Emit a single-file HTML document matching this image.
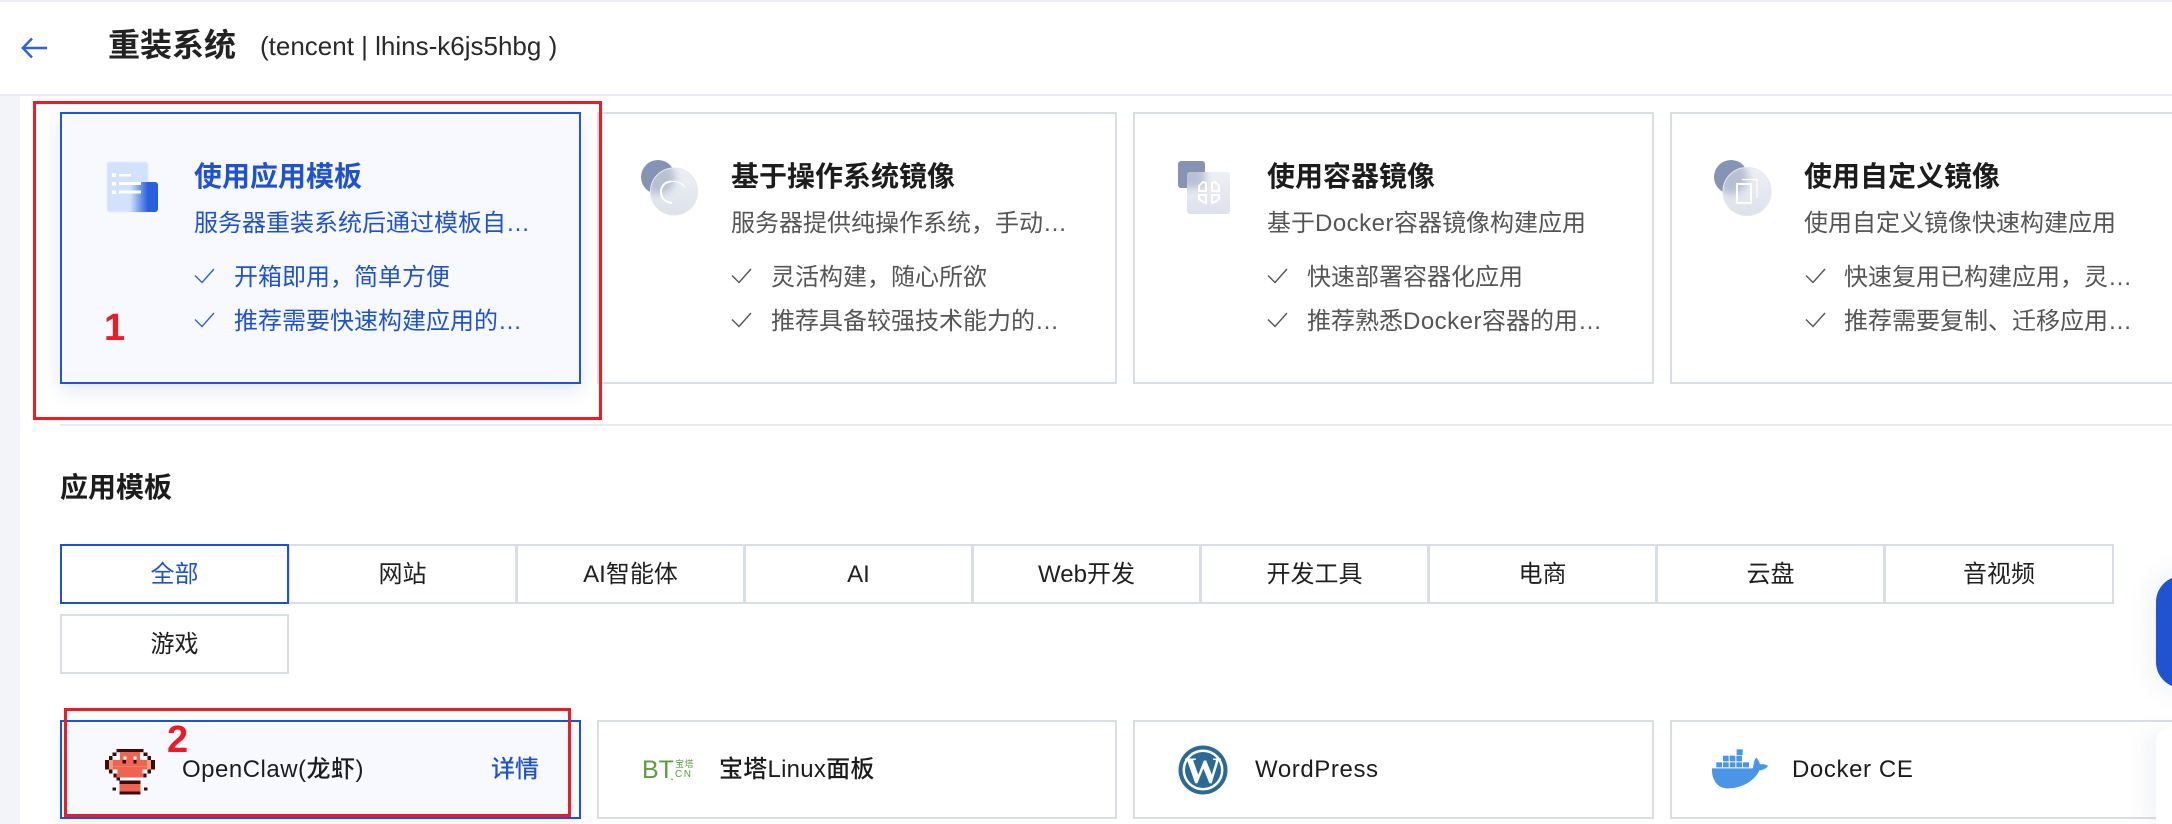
<!DOCTYPE html>
<html lang="zh-CN">
<head>
<meta charset="utf-8">
<title>重装系统</title>
<style>
html,body{margin:0;padding:0;width:2172px;height:824px;overflow:hidden;background:#fff}
body{font-family:"Liberation Sans","Noto Sans CJK SC",sans-serif;color:#1c1c1c}
#root{position:absolute;left:0;top:0;width:2172px;height:824px;overflow:hidden;filter:blur(.3px)}
.a,.t,.card,.tab,.item,.box{position:absolute;box-sizing:border-box}
.t{white-space:nowrap;line-height:40px;height:40px}
.card{top:112px;width:521px;height:272px;border:2px solid #d9dde4;background:#fff}
.card.on{border-color:#2257d4;background:#f8f9ff;box-shadow:0 6px 18px rgba(60,80,140,.14);z-index:2}
.ti{font-size:28px;font-weight:700;color:#1c1c1c}
.de{font-size:24px;color:#555}
.li{font-size:24px;color:#555}
.la{letter-spacing:.5px}
.blue{color:#1f52cf!important}
.tab{top:544px;height:60px;width:229px;border:2px solid #d9dde4;background:#fff;font-size:24px;line-height:58px;text-align:center;color:#1f1f1f}
.tab.on{border-color:#1f52cf;color:#1f52cf;z-index:2}
.item{top:720px;height:99px;width:521px;border:2px solid #d9dde4;background:#fff}
.item.on{border-color:#1f52cf;background:#f8f9ff;box-shadow:0 4px 14px rgba(60,80,140,.1)}
.nm{font-size:24px;color:#1c1c1c;font-weight:500}
.box{border:3px solid #ed1c24;z-index:6}
.red{color:#ed1c24;font-weight:700;font-family:"Liberation Sans",sans-serif;z-index:6}
svg{position:absolute;overflow:visible}
</style>
</head>
<body>
<div id="root">
<!-- page chrome -->
<div class="a" style="left:0;top:0;width:2172px;height:2px;background:#eceef3"></div>
<div class="a" style="left:0;top:94px;width:2172px;height:2px;background:#e9ebf0"></div>
<div class="a" style="left:0;top:96px;width:20px;height:728px;background:#f3f4f9"></div>
<svg style="left:0;top:0" width="60" height="90" viewBox="0 0 60 90"><path d="M47 48H24M32 38.500L22.800 48L32 57.500" fill="none" stroke="#2f62d8" stroke-width="2.400"/></svg>
<div class="t" style="left:108px;top:25px;font-size:32px;font-weight:700;color:#222">重装系统</div>
<div class="t" style="left:260px;top:26px;font-size:26px;color:#2a2a2a">(tencent | lhins-k6js5hbg )</div>

<!-- top cards -->
<div class="card on" style="left:60px"></div>
<div class="card" style="left:597px;width:520px"></div>
<div class="card" style="left:1133px"></div>
<div class="card" style="left:1670px"></div>

<!-- icon 1 -->
<svg style="left:0;top:0;z-index:3" width="200" height="230" viewBox="0 0 200 230">
<defs><linearGradient id="g1" x1="130" x2="148" y1="0" y2="0" gradientUnits="userSpaceOnUse"><stop offset="0" stop-color="#d3e2fc"/><stop offset="1" stop-color="#2a5fdd"/></linearGradient></defs>
<rect x="107" y="162" width="41" height="50" rx="3" fill="#d3e2fc" stroke="#e0eafd" stroke-width="1"/>
<path d="M130 182H155a3 3 0 0 1 3 3V209a3 3 0 0 1-3 3H130Z" fill="url(#g1)"/>
<g fill="#fff"><rect x="112" y="173" width="4" height="4"/><rect x="112" y="182" width="4" height="3.500"/><rect x="112" y="190.500" width="4" height="3.500"/><rect x="119" y="174" width="12" height="2.500"/><rect x="119" y="182" width="22" height="3"/><rect x="119" y="190.500" width="22" height="3"/></g>
</svg>

<!-- icon 2 -->
<svg style="left:0;top:0;z-index:3" width="720" height="230" viewBox="0 0 720 230">
<defs>
<linearGradient id="g2" x1="0" y1="0" x2="0" y2="1"><stop offset="0" stop-color="#eef0f5"/><stop offset="1" stop-color="#dde1ea"/></linearGradient>
<filter id="b2" x="-30%" y="-30%" width="160%" height="160%"><feGaussianBlur stdDeviation="4"/></filter>
<clipPath id="c2"><circle cx="674" cy="191.500" r="24"/></clipPath>
</defs>
<circle cx="658" cy="177" r="17" fill="#8593b4"/>
<circle cx="674" cy="191.500" r="24" fill="url(#g2)"/>
<circle cx="658" cy="177" r="17" fill="#8593b4" filter="url(#b2)" clip-path="url(#c2)" opacity=".5"/>
<circle cx="674" cy="191.500" r="23.500" fill="none" stroke="#e3e7ee"/>
<path d="M671 181.500C664 182 661 187 661 192C661 198 665 202 672 203" fill="none" stroke="#fff" stroke-width="2"/>
<path d="M671 181.500C676 181 681 182 685 187" fill="none" stroke="#fff" stroke-width="1.200"/>
</svg>

<!-- icon 3 -->
<svg style="left:0;top:0;z-index:3" width="1240" height="230" viewBox="0 0 1240 230">
<defs>
<filter id="b3" x="-30%" y="-30%" width="160%" height="160%"><feGaussianBlur stdDeviation="4"/></filter>
<clipPath id="c3"><rect x="1187" y="172" width="43" height="42" rx="3"/></clipPath>
</defs>
<rect x="1178" y="161" width="27" height="27" rx="3" fill="#8593b4"/>
<rect x="1187" y="172" width="43" height="42" rx="3" fill="url(#g2)"/>
<rect x="1178" y="161" width="27" height="27" rx="3" fill="#8593b4" filter="url(#b3)" clip-path="url(#c3)" opacity=".5"/>
<g fill="none" stroke="#fff" stroke-width="2">
<path d="M1199 186V191H1206V183L1203 182Z"/><path d="M1219 186V191H1212V183L1215 182Z"/>
<path d="M1199 199V195H1206V203L1203 202Z"/><path d="M1219 199V195H1212V203L1215 202Z"/>
</g>
</svg>

<!-- icon 4 -->
<svg style="left:0;top:0;z-index:3" width="1790" height="230" viewBox="0 0 1790 230">
<defs>
<filter id="b4" x="-30%" y="-30%" width="160%" height="160%"><feGaussianBlur stdDeviation="4"/></filter>
<clipPath id="c4"><circle cx="1747" cy="191.500" r="24.500"/></clipPath>
</defs>
<circle cx="1731" cy="177" r="17" fill="#8593b4"/>
<circle cx="1747" cy="191.500" r="24.500" fill="url(#g2)"/>
<circle cx="1731" cy="177" r="17" fill="#8593b4" filter="url(#b4)" clip-path="url(#c4)" opacity=".5"/>
<circle cx="1747" cy="191.500" r="24" fill="none" stroke="#e3e7ee"/>
<rect x="1737" y="184" width="14" height="19" fill="none" stroke="#fff" stroke-width="2"/>
<path d="M1742 179.500H1757V198" fill="none" stroke="#fff" stroke-width="1.200"/>
</svg>

<!-- checks -->
<svg style="left:0;top:0;z-index:3" width="1840" height="340" viewBox="0 0 1840 340" fill="none" stroke-width="1.400">
<g stroke="#2f62d8"><path d="M195 275.500L202 282.500L214 269"/><path d="M195 319.500L202 326.500L214 313"/></g>
<g stroke="#555"><path d="M732 275.500L739 282.500L751 269"/><path d="M732 319.500L739 326.500L751 313"/>
<path d="M1268 275.500L1275 282.500L1287 269"/><path d="M1268 319.500L1275 326.500L1287 313"/>
<path d="M1806 275.500L1813 282.500L1825 269"/><path d="M1806 319.500L1813 326.500L1825 313"/></g>
</svg>

<!-- card texts -->
<div class="t ti blue" style="left:194px;top:157px;z-index:3">使用应用模板</div>
<div class="t de blue" style="left:194px;top:204px;z-index:3">服务器重装系统后通过模板自…</div>
<div class="t li blue" style="left:234px;top:258px;z-index:3">开箱即用，简单方便</div>
<div class="t li blue" style="left:234px;top:302px;z-index:3">推荐需要快速构建应用的…</div>

<div class="t ti" style="left:731px;top:157px">基于操作系统镜像</div>
<div class="t de" style="left:731px;top:204px">服务器提供纯操作系统，手动…</div>
<div class="t li" style="left:771px;top:258px">灵活构建，随心所欲</div>
<div class="t li" style="left:771px;top:302px">推荐具备较强技术能力的…</div>

<div class="t ti" style="left:1267px;top:157px">使用容器镜像</div>
<div class="t de" style="left:1267px;top:204px">基于<span class="la">Docker</span>容器镜像构建应用</div>
<div class="t li" style="left:1307px;top:258px">快速部署容器化应用</div>
<div class="t li" style="left:1307px;top:302px">推荐熟悉<span class="la">Docker</span>容器的用…</div>

<div class="t ti" style="left:1804px;top:157px">使用自定义镜像</div>
<div class="t de" style="left:1804px;top:204px">使用自定义镜像快速构建应用</div>
<div class="t li" style="left:1844px;top:258px">快速复用已构建应用，灵…</div>
<div class="t li" style="left:1844px;top:302px">推荐需要复制、迁移应用…</div>

<!-- annotation 1 -->
<div class="box" style="left:33px;top:101px;width:569px;height:319px"></div>
<div class="t red" style="left:104px;top:308px;font-size:38px">1</div>

<!-- divider -->
<div class="a" style="left:60px;top:424px;width:2112px;height:2px;background:#e9ebf0"></div>

<!-- section -->
<div class="t" style="left:60px;top:468px;font-size:28px;font-weight:700;color:#1c1c1c">应用模板</div>

<!-- tabs -->
<div class="tab on" style="left:60px;">全部</div>
<div class="tab" style="left:288px">网站</div>
<div class="tab" style="left:516px">AI智能体</div>
<div class="tab" style="left:744px">AI</div>
<div class="tab" style="left:972px">Web开发</div>
<div class="tab" style="left:1200px">开发工具</div>
<div class="tab" style="left:1428px">电商</div>
<div class="tab" style="left:1656px">云盘</div>
<div class="tab" style="left:1884px;width:230px">音视频</div>
<div class="tab" style="left:60px;top:614px">游戏</div>

<!-- items -->
<div class="item on" style="left:60px"></div>
<div class="item" style="left:597px;width:520px"></div>
<div class="item" style="left:1133px"></div>
<div class="item" style="left:1670px"></div>

<!-- crab -->
<svg style="left:90px;top:730px;z-index:3" width="90" height="70" viewBox="0 0 270 210" shape-rendering="crispEdges">
<g fill="#ef6351"><rect x="80" y="66" width="80" height="12"/><rect x="68" y="78" width="104" height="12"/><rect x="57" y="90" width="126" height="34"/><rect x="70" y="124" width="100" height="12"/><rect x="80" y="136" width="80" height="6"/><rect x="88" y="162" width="64" height="22"/></g>
<g fill="#f59a7f"><rect x="57" y="90" width="12" height="28"/><rect x="171" y="90" width="12" height="28"/><rect x="57" y="108" width="126" height="2"/></g>
<g fill="#fff"><rect x="80" y="68" width="10" height="10"/><rect x="150" y="68" width="10" height="10"/><rect x="68" y="78" width="22" height="12"/><rect x="150" y="78" width="22" height="12"/><rect x="100" y="80" width="10" height="8"/><rect x="130" y="80" width="10" height="8"/><rect x="68" y="118" width="14" height="12"/><rect x="158" y="118" width="14" height="12"/><rect x="78" y="163" width="10" height="9"/><rect x="152" y="163" width="10" height="9"/></g>
<g fill="#3a0d0d"><rect x="80" y="57" width="80" height="9"/><rect x="68" y="68" width="12" height="10"/><rect x="160" y="68" width="12" height="10"/><rect x="57" y="78" width="11" height="12"/><rect x="172" y="78" width="11" height="12"/><rect x="45" y="90" width="12" height="28"/><rect x="183" y="90" width="12" height="28"/><rect x="57" y="118" width="11" height="12"/><rect x="172" y="118" width="11" height="12"/><rect x="70" y="130" width="10" height="12"/><rect x="160" y="130" width="10" height="12"/><rect x="80" y="142" width="10" height="9"/><rect x="88" y="152" width="64" height="10"/><rect x="68" y="172" width="10" height="10"/><rect x="162" y="172" width="10" height="10"/><rect x="88" y="184" width="64" height="9"/><rect x="98" y="90" width="10" height="10"/><rect x="130" y="90" width="10" height="10"/></g>
</svg>
<div class="t nm" style="left:182px;top:750px;z-index:3;letter-spacing:.5px">OpenClaw(龙虾)</div>
<div class="t nm blue" style="left:491px;top:750px;z-index:3;font-weight:500">详情</div>

<!-- BT -->
<div class="t" style="left:642px;top:750px;font-size:25px;color:#5b9e40;line-height:40px">BT</div>
<div class="t" style="left:670px;top:755px;font-size:14px;color:#5b9e40;line-height:40px">.</div>
<div class="t" style="left:675px;top:744px;font-size:9px;color:#5b9e40;line-height:40px;letter-spacing:.5px">宝塔</div>
<div class="t" style="left:675px;top:755px;font-size:10px;color:#5b9e40;line-height:40px;letter-spacing:1.500px">CN</div>
<div class="t nm" style="left:719px;top:750px;letter-spacing:.25px">宝塔Linux面板</div>

<!-- WordPress -->
<svg style="left:1178px;top:745px" width="50" height="50" viewBox="0 0 50 50">
<circle cx="25" cy="25" r="24.500" fill="#2a6a94"/>
<circle cx="25" cy="25" r="20.500" fill="#fff"/>
<circle cx="25" cy="25" r="18" fill="#2a6a94"/>
<text x="25" y="38" text-anchor="middle" font-family="Liberation Serif,serif" font-weight="700" font-size="37" fill="#fff">W</text>
</svg>
<div class="t nm" style="left:1255px;top:750px;letter-spacing:.6px">WordPress</div>

<!-- Docker -->
<svg style="left:1690px;top:735px" width="100" height="70" viewBox="0 0 300 210">
<path fill="#4a95e6" d="M66 100H188C191 92 190 80 198 68C204 72 208 80 210 88C218 86 228 88 234 93C228 102 216 106 208 106C196 134 160 160 112 160C80 160 64 130 66 100Z"/>
<g fill="#4a95e6"><rect x="79" y="82" width="17" height="15"/><rect x="99" y="82" width="17" height="15"/><rect x="119" y="82" width="17" height="15"/><rect x="139" y="82" width="17" height="15"/><rect x="159" y="82" width="18" height="15"/><rect x="99" y="62" width="17" height="17"/><rect x="119" y="62" width="17" height="17"/><rect x="139" y="62" width="17" height="17"/><rect x="140" y="43" width="18" height="17"/></g>
</svg>
<div class="t nm" style="left:1792px;top:750px;letter-spacing:.6px">Docker CE</div>

<!-- annotation 2 -->
<div class="box" style="left:64px;top:708px;width:507px;height:109px"></div>
<div class="t red" style="left:167px;top:720px;font-size:38px">2</div>

<!-- floating elements -->
<div class="a" style="left:2156px;top:576px;width:40px;height:112px;background:#2152d0;border-radius:26px 0 0 26px;box-shadow:0 0 30px rgba(60,80,140,.12);z-index:7"></div>
<div class="a" style="left:2156px;top:727px;width:16px;height:97px;overflow:hidden;background:#fff;border-radius:18px 0 0 0;box-shadow:-6px 0 24px rgba(60,80,140,.1);z-index:7"></div>
</div>
</body>
</html>
